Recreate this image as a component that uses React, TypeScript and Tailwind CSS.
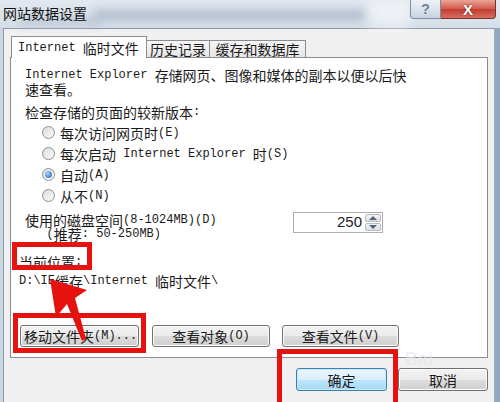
import React from "react";

function T({ s }: { s: string }) {
  const parts = s.match(/[\x20-\x7e]+|[^\x20-\x7e]+/g) || [];
  return (
    <>
      {parts.map((p, i) =>
        /^[\x20-\x7e]+$/.test(p) ? (
          <span key={i} className="font-['Liberation_Mono',monospace] text-[12px] leading-[14px] whitespace-pre">
            {p}
          </span>
        ) : (
          <span key={i} className="leading-[14px] whitespace-pre">{p}</span>
        )
      )}
    </>
  );
}

function Line({ s, cls = "" }: { s: string; cls?: string }) {
  return (
    <div className={"h-[14px] flex items-center whitespace-pre " + cls}>
      <T s={s} />
    </div>
  );
}

function Radio({ label, checked }: { label: string; checked?: boolean }) {
  return (
    <div className="flex items-center h-[21px] pl-[31px] gap-[5px]">
      <div className="w-[13px] h-[13px] rounded-full border border-[#8e8f8f] bg-gradient-to-br from-[#dcdcdc] to-[#fbfbfb] flex items-center justify-center">
        {checked && (
          <div className="w-[7px] h-[7px] rounded-full bg-[radial-gradient(circle_at_35%_35%,#9fd3ff,#1d5ea8)]" />
        )}
      </div>
      <Line s={label} />
    </div>
  );
}

function Btn({ cls, label, def }: { cls: string; label: string; def?: boolean }) {
  return (
    <div
      className={
        "h-full flex items-center justify-center rounded-[3px] border whitespace-pre " +
        (def
          ? "border-[#3c7fb1] bg-[linear-gradient(#eaf6fd_0%,#d9f0fc_50%,#bee6fd_51%,#a7d9f5_100%)] shadow-[inset_0_0_0_1px_#c8e8fb] "
          : "border-[#707070] bg-[linear-gradient(#f2f2f2_0%,#ebebeb_50%,#dddddd_51%,#cfcfcf_100%)] shadow-[inset_0_0_0_1px_#fcfcfc] ") +
        cls
      }
    >
      <T s={label} />
    </div>
  );
}

export default function App() {
  return (
    <div className="w-[500px] h-[402px] relative overflow-hidden bg-[linear-gradient(90deg,#c9d6e3_0%,#c3d1df_90%,#8ea6c0_100%)] flex flex-col font-['Noto_Sans_CJK_SC',sans-serif] text-[14px] text-[#1a1a1a]">
      {/* title bar */}
      <div className="h-[28px] shrink-0 relative flex bg-[linear-gradient(180deg,#e2e8ef_0%,#d5dee8_100%)]">
        <div className="absolute left-[95px] top-[9px] w-[270px] h-[12px] bg-[#7f93ad] blur-[4px] opacity-40" />
        <div className="absolute left-[20px] top-[16px] w-[80px] h-[10px] bg-[#9aabc0] blur-[5px] opacity-40" />
        <div className="absolute left-[370px] top-[0px] w-[40px] h-[28px] bg-[#ffffff] blur-[6px] opacity-50" />
        <div className="relative pl-[3px] pt-[5px] leading-[16px] text-[#111]">网站数据设置</div>
        <div className="relative ml-auto mr-[4px] flex h-[19px]">
          <div className="w-[31px] h-full border border-[#7d8ea3] border-t-0 rounded-bl-[4px] bg-[linear-gradient(#eef2f7,#c8d3e0)] flex items-center justify-center text-[#6d7f96] font-['Liberation_Sans',sans-serif] text-[14px] font-bold leading-none">
            ?
          </div>
          <div className="w-[55px] h-full border border-[#7a2f2a] border-t-0 border-l-0 rounded-br-[4px] bg-[linear-gradient(#e9a597,#d4584a_50%,#c13c2e_51%,#d66f5f)] flex items-center justify-center text-white font-['Liberation_Sans',sans-serif] text-[15px] font-bold leading-none [text-shadow:0_0_2px_#5a1a14]">
            X
          </div>
        </div>
      </div>

      {/* client area */}
      <div className="flex-1 ml-[3px] mr-[6px] bg-[#f0f0f0] border-l border-t border-[#8d9aa8] flex flex-col">
        {/* tabs */}
        <div className="relative z-10 mt-[7px] ml-[7px] flex items-end -mb-[1px]">
          <div className="w-[136px] h-[22px] border border-b-0 border-[#898c95] bg-white pl-[6px] pt-[4px]">
            <Line s="Internet 临时文件" />
          </div>
          <div className="w-[63px] h-[17px] mb-[1px] border border-l-0 border-b-0 border-[#898c95] bg-[linear-gradient(#f6f6f6,#e6e6e6)] flex items-center justify-center">
            <Line s="历史记录" />
          </div>
          <div className="w-[96px] h-[17px] mb-[1px] border border-l-0 border-b-0 border-[#898c95] bg-[linear-gradient(#f6f6f6,#e6e6e6)] flex items-center justify-center">
            <Line s="缓存和数据库" />
          </div>
        </div>

        {/* panel */}
        <div className="ml-[6px] w-[478px] h-[301px] border border-[#898c95] bg-white flex flex-col">
          <div className="ml-[14px] mt-[10px]">
            <Line s="Internet Explorer 存储网页、图像和媒体的副本以便以后快" />
            <Line s="速查看。" />
          </div>
          <Line cls="ml-[14px] mt-[9px]" s="检查存储的页面的较新版本:" />
          <div className="mt-[3px] flex flex-col">
            <Radio label="每次访问网页时(E)" />
            <Radio label="每次启动 Internet Explorer 时(S)" />
            <Radio label="自动(A)" checked />
            <Radio label="从不(N)" />
          </div>
          <div className="mt-[7px] flex items-start">
            <div className="ml-[14px] w-[268px]">
              <Line s="使用的磁盘空间(8-1024MB)(D)" />
              <Line s="   (推荐: 50-250MB)" />
            </div>
            <div className="-mt-[1px] w-[90px] h-[21px] border border-[#abadb3] bg-white flex">
              <div className="flex-1 flex items-center justify-end pr-[2px] font-['Liberation_Sans',sans-serif] text-[15px] text-[#222]">
                250
              </div>
              <div className="w-[18px] flex flex-col p-[1px] gap-[1px]">
                <div className="flex-1 rounded-[2px] border border-[#b8bcc4] bg-[linear-gradient(#f3f3f3,#dcdfe4)] flex items-center justify-center">
                  <div className="w-0 h-0 border-l-[4px] border-r-[4px] border-b-[4px] border-l-transparent border-r-transparent border-b-[#4d6185]" />
                </div>
                <div className="flex-1 rounded-[2px] border border-[#b8bcc4] bg-[linear-gradient(#f3f3f3,#dcdfe4)] flex items-center justify-center">
                  <div className="w-0 h-0 border-l-[4px] border-r-[4px] border-t-[4px] border-l-transparent border-r-transparent border-t-[#4d6185]" />
                </div>
              </div>
            </div>
          </div>
          <Line cls="ml-[8px] mt-[14px]" s="当前位置:" />
          <Line cls="ml-[8px] mt-[5px]" s="D:\IE缓存\Internet 临时文件\" />
          <div className="ml-[9px] mt-[37px] h-[22px] flex">
            <Btn cls="w-[119px] justify-start pl-[3px]" label="移动文件夹(M)..." />
            <Btn cls="w-[118px] ml-[13px]" label="查看对象(O)" />
            <Btn cls="w-[117px] ml-[12px]" label="查看文件(V)" />
          </div>
        </div>

        {/* bottom buttons */}
        <div className="mt-[10px] h-[23px] flex justify-end mr-[6px]">
          <Btn cls="w-[91px]" label="确定" def />
          <Btn cls="w-[90px] ml-[11px]" label="取消" />
        </div>
      </div>

      {/* watermark */}
      <div className="absolute left-[405px] top-[350px] text-[18px] font-bold font-['Liberation_Sans',sans-serif] text-[#e3e6ea] opacity-60 leading-none">
        Bai
      </div>

      {/* red annotations */}
      <div className="absolute left-[12px] top-[242px] w-[80px] h-[28px] border-[5px] border-[#e5120d]" />
      <div className="absolute left-[13px] top-[313px] w-[133px] h-[40px] border-[5px] border-[#e5120d]" />
      <div className="absolute left-[277px] top-[349px] w-[121px] h-[60px] border-[5px] border-[#e5120d]" />
      <svg className="absolute left-0 top-0" width="500" height="402" viewBox="0 0 500 402">
        <polygon points="50,279 87,290 75,298 86,339 82,341 67,304 56,317" fill="#e5120d" />
      </svg>
    </div>
  );
}
